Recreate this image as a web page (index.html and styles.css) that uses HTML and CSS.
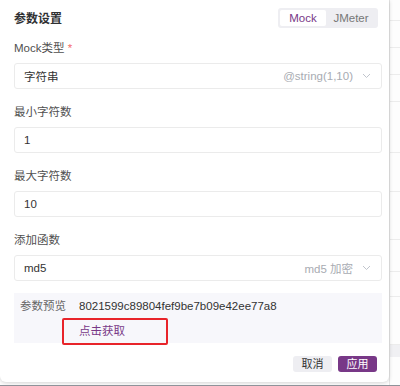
FILE: index.html
```html
<!DOCTYPE html>
<html lang="zh-CN">
<head>
  <meta charset="UTF-8" />
  <meta name="viewport" content="width=device-width, initial-scale=1.0"/>
  <title>参数设置</title>
  <link rel="stylesheet" href="styles.css">
</head>
<body>

  <div class="page">
    <div class="panel">
      <div class="head">
        <span class="title">参数设置</span>
        <div class="tabs">
          <span class="tab active">Mock</span>
          <span class="tab">JMeter</span>
        </div>
      </div>

      <div class="item">
        <div class="label">Mock类型 <span class="req">*</span></div>
        <div class="box">
          <span>字符串</span>
          <span class="hint">@string(1,10)</span>
          <svg class="arrow" width="9" height="6" viewBox="0 0 9 6"><path d="M1 1l3.5 3.5L8 1" fill="none" stroke="#c0c4cc" stroke-width="1"/></svg>
        </div>
      </div>

      <div class="item">
        <div class="label">最小字符数</div>
        <div class="box">1</div>
      </div>

      <div class="item">
        <div class="label">最大字符数</div>
        <div class="box">10</div>
      </div>

      <div class="item">
        <div class="label">添加函数</div>
        <div class="box">
          <span>md5</span>
          <span class="hint">md5 加密</span>
          <svg class="arrow" width="9" height="6" viewBox="0 0 9 6"><path d="M1 1l3.5 3.5L8 1" fill="none" stroke="#c0c4cc" stroke-width="1"/></svg>
        </div>
      </div>

      <div class="preview">
        <div class="row">
          <span class="pname">参数预览</span>
          <span class="pval">8021599c89804fef9be7b09e42ee77a8</span>
        </div>
        <div class="row">
          <span class="pname"></span>
          <span class="fetch">点击获取</span>
        </div>
        <div class="mark"></div>
      </div>

      <div class="foot">
        <button class="btn">取消</button>
        <button class="btn primary">应用</button>
      </div>
    </div>

    <div class="side">
      <div class="ln" style="height:21px"></div>
      <div class="ln" style="height:27px"></div>
      <div class="ln" style="height:27px"></div>
      <div class="ln" style="height:27px"></div>
      <div class="ln" style="height:51px"></div>
      <div class="ln" style="height:39px"></div>
      <div class="ln" style="height:48px"></div>
      <div class="ln" style="height:32px"></div>
      <div class="ln" style="height:25px"></div>
      <div class="ln" style="height:48px"></div>
      <div class="band"></div>
    </div>
  </div>

</body>
</html>
```

FILE: styles.css
```css
:root { --accent: #783887; }
* { box-sizing: border-box; }
body {
  margin: 0; padding: 0;
  background: #fff; color: #333;
  font-family: 'Liberation Sans', 'Noto Sans CJK SC', sans-serif;
  font-size: 11.5px;
}
.page {
  display: flex; height: 386px;
  border-bottom: 1px solid #8f939a;
  overflow: hidden;
}
.panel {
  width: 389px; height: 382px;
  padding: 0 7px 0 14px; flex-shrink: 0;
  background: #fff; border-radius: 0 0 6px 6px;
  box-shadow: 0 1px 4px rgba(0,0,0,0.18);
  position: relative; z-index: 1;
}
.head {
  height: 35px; display: flex;
  align-items: center; justify-content: space-between;
}
.title { font-weight: bold; font-size: 12px; color: #303133; }
.tabs {
  display: flex; background: #eeeef2;
  border-radius: 3px; padding: 2px;
  margin-right: 4px;
}
.tab {
  width: 46px; height: 16px; line-height: 16px;
  text-align: center; color: #777;
  border-radius: 2px;
}
.tab + .tab { margin-left: 6px; width: 38px; margin-right: 6px; }
.tab.active { background: #fff; color: var(--accent); }
.item { margin-bottom: 14px; }
.label {
  height: 18px; line-height: 18px;
  margin: 4px 0 6px; color: #505050;
}
.item + .item .label { margin-top: 0; }
.req { color: #f56c6c; }
.box {
  height: 26px; border: 1px solid #ebebeb;
  border-radius: 3px; padding: 0 10px 0 9px;
  display: flex; align-items: center;
  color: #333;
}
.hint { margin-left: auto; color: #a8abb2; }
.arrow { margin-left: 9px; }
.preview {
  margin-top: -2px; background: #f7f7fb;
  height: 50px; padding: 4px 6px 0;
  position: relative;
}
.row { display: flex; height: 18px; line-height: 18px; }
.row + .row { margin-top: 7px; }
.pname { width: 59px; color: #666; }
.pval { color: #333; }
.fetch { color: var(--accent); }
.mark {
  position: absolute; left: 48px; top: 25px;
  width: 106px; height: 27px;
  border: 2px solid #e8242a; border-radius: 2px;
}
.foot {
  display: flex; justify-content: flex-end;
  gap: 6px; margin-top: 13px; padding-right: 5px;
}
.btn {
  width: 39px; height: 16px; padding: 0;
  border: none; border-radius: 3px;
  background: #eeeef2; color: #333;
  font: inherit; font-size: 11px; line-height: 16px;
}
.btn.primary { background: var(--accent); color: #fff; }
.side {
  flex: 1; border-left: 1px solid #e6e6e6;
  background: #fdfdfd;
}
.ln { border-bottom: 1px solid #ececec; }
.band { height: 12px; background: #f0f0f3; }
```
